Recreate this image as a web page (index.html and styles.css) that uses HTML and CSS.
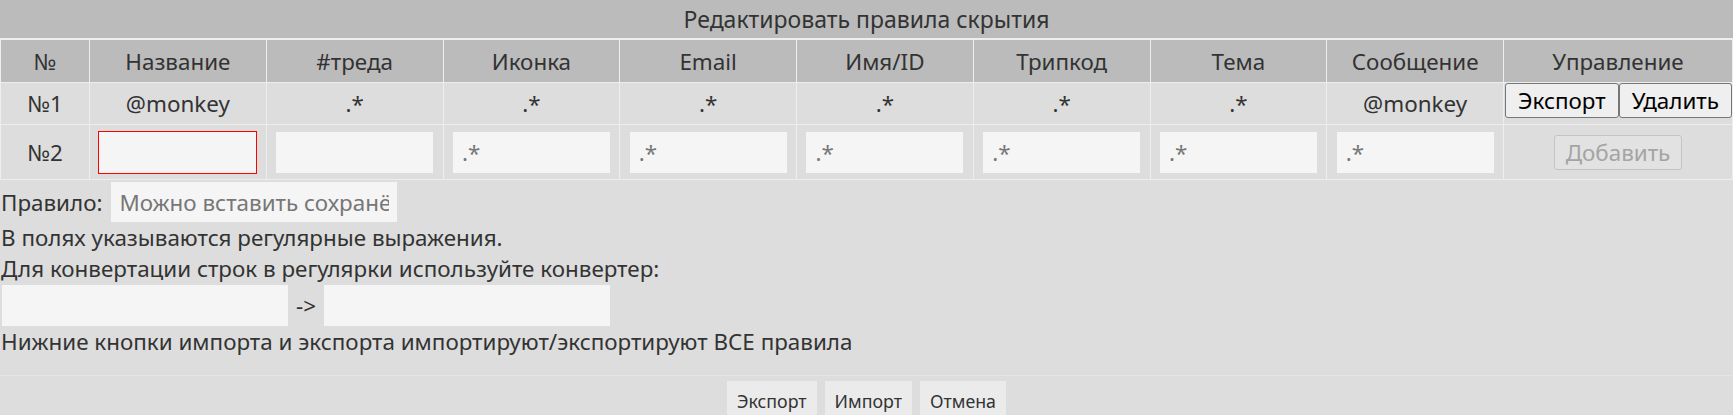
FILE: index.html
```html
<!DOCTYPE html>
<html lang="ru">
<head>
<meta charset="utf-8">
<title>Правила скрытия</title>
<link rel="stylesheet" href="styles.css">
</head>
<body>
<div class="popup">
  <div class="popup-title">Редактировать правила скрытия</div>
  <table class="rules">
    <colgroup>
      <col class="c-num">
      <col span="8">
      <col class="c-ctrl">
    </colgroup>
    <thead>
      <tr>
        <th>№</th><th>Название</th><th>#треда</th><th>Иконка</th><th>Email</th>
        <th>Имя/ID</th><th>Трипкод</th><th>Тема</th><th>Сообщение</th><th>Управление</th>
      </tr>
    </thead>
    <tbody>
      <tr class="rule-row">
        <td>№1</td><td>@monkey</td><td>.*</td><td>.*</td><td>.*</td>
        <td>.*</td><td>.*</td><td>.*</td><td>@monkey</td>
        <td class="ctrl"><div class="ctrl-btns"><button class="btn">Экспорт</button><button class="btn">Удалить</button></div></td>
      </tr>
      <tr class="new-row">
        <td>№2</td>
        <td><input class="field cell-field invalid" type="text"></td>
        <td><input class="field cell-field" type="text"></td>
        <td><input class="field cell-field" type="text" placeholder=".*"></td>
        <td><input class="field cell-field" type="text" placeholder=".*"></td>
        <td><input class="field cell-field" type="text" placeholder=".*"></td>
        <td><input class="field cell-field" type="text" placeholder=".*"></td>
        <td><input class="field cell-field" type="text" placeholder=".*"></td>
        <td><input class="field cell-field" type="text" placeholder=".*"></td>
        <td><button class="btn btn-add" disabled>Добавить</button></td>
      </tr>
    </tbody>
  </table>

  <div class="rule-line">
    <span>Правило:</span>
    <input class="field wide-field" type="text" placeholder="Можно вставить сохранённое правило">
  </div>
  <p class="note">В полях указываются регулярные выражения.</p>
  <p class="note">Для конвертации строк в регулярки используйте конвертер:</p>
  <div class="converter">
    <input class="field wide-field" type="text">
    <span>-&gt;</span>
    <input class="field wide-field" type="text">
  </div>
  <p class="note">Нижние кнопки импорта и экспорта импортируют/экспортируют ВСЕ правила</p>

  <div class="popup-footer">
    <button class="foot-btn">Экспорт</button>
    <button class="foot-btn">Импорт</button>
    <button class="foot-btn">Отмена</button>
  </div>
</div>
</body>
</html>
```

FILE: styles.css
```css
html, body {
  margin: 0;
  background: #dddddd;
}

body {
  font-family: "Noto Sans", "Open Sans", sans-serif;
  font-size: 22.4px;
  color: #333333;
}

.popup-title {
  height: 38px;
  line-height: 38px;
  background: #bbbbbb;
  text-align: center;
  font-size: 23px;
}

/* rules table */
.rules {
  width: 100%;
  table-layout: fixed;
  border-collapse: separate;
  border-spacing: 0;
  border-top: 2px solid #eeeeee;
  border-left: 1px solid #eeeeee;
}

.rules .c-num { width: 89px; }
.rules .c-ctrl { width: 229px; }

.rules th,
.rules td {
  padding: 0;
  border-right: 1px solid #eeeeee;
  border-bottom: 1px solid #eeeeee;
  text-align: center;
  vertical-align: middle;
  font-weight: normal;
  white-space: nowrap;
}

.rules th {
  background: #bbbbbb;
  height: 42px;
}

.rule-row td { height: 41px; }
.new-row td { height: 54px; }

.rules td.ctrl {
  vertical-align: top;
  text-align: left;
}

.ctrl-btns {
  display: flex;
  padding-left: 1px;
}

.btn {
  height: 35px;
  padding: 0 12px;
  font: inherit;
  color: #000000;
  background: #efefef;
  border: 1px solid #767676;
  border-radius: 3px;
}

.btn-add {
  padding: 0 11px;
  color: #a4a4a4;
  background: #e2e2e2;
  border-color: #c4c4c4;
}

/* text inputs */
.field {
  box-sizing: border-box;
  height: 41px;
  padding: 0 9px;
  border: 0;
  background: #f5f5f5;
  font: inherit;
  color: #333333;
  outline: none;
  vertical-align: middle;
}

.field::placeholder {
  color: #777777;
}

.cell-field {
  width: 157px;
}

.invalid {
  outline: 1px solid #ff0000;
}

.wide-field {
  width: 286px;
}

.rule-line {
  display: flex;
  align-items: center;
  gap: 9px;
  margin-top: 2px;
  padding-left: 1px;
}

.rule-line .field {
  height: 40px;
  padding: 0 8px;
}

.note {
  margin: 0;
  line-height: 31px;
  padding-left: 1px;
}

.converter {
  display: flex;
  align-items: center;
  gap: 8px;
  padding-left: 2px;
  margin-top: 1px;
}

/* footer with global actions */
.popup-footer {
  display: flex;
  justify-content: center;
  gap: 8px;
  margin-top: 18px;
  padding-top: 5px;
  border-top: 1px solid #e5e5e5;
}

.foot-btn {
  height: 40px;
  padding: 0 10px;
  border: 0;
  background: #ebebeb;
  font-family: inherit;
  font-size: 17.8px;
  color: #333333;
}
```
